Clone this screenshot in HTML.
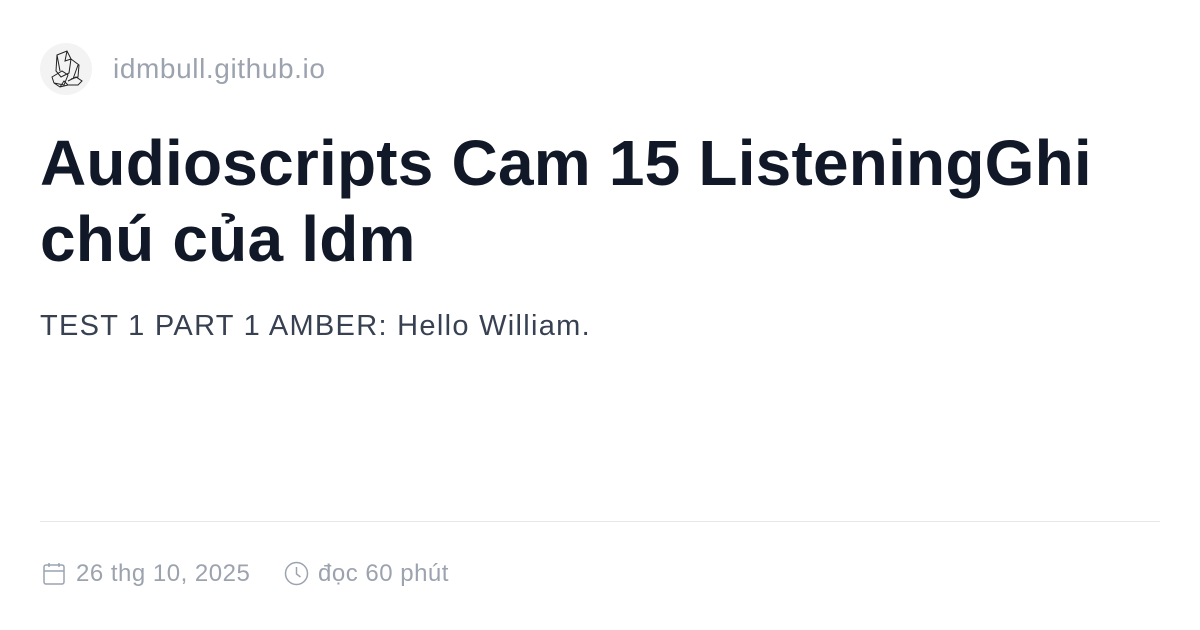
<!DOCTYPE html>
<html><head><meta charset="utf-8"><style>
body{margin:0;width:1200px;height:630px;background:#fff;font-family:"Liberation Sans",sans-serif;position:relative;overflow:hidden}
.logo{position:absolute;left:40px;top:43px;width:52px;height:52px;border-radius:50%;background:#f3f3f3}
.dom{position:absolute;left:113px;top:52px;font-size:28px;color:#9ca3af;line-height:34px;letter-spacing:0.6px}
h1{position:absolute;left:40px;top:125px;margin:0;width:1100px;font-size:64px;font-weight:700;color:#111827;line-height:76px;letter-spacing:0.2px}
.sub{position:absolute;left:40px;top:306px;font-size:29px;color:#374151;line-height:40px;letter-spacing:1.3px}
.hr{position:absolute;left:40px;top:521px;width:1120px;height:1px;background:#e5e7eb}
.ft{position:absolute;top:559px;font-size:24px;color:#9ca3af;line-height:30px;letter-spacing:0.5px}
</style></head><body>
<div class="logo"><svg width="52" height="52" viewBox="0 0 52 52" fill="none" stroke="#222" stroke-width="1"><path d="M17 12l10-4 4 8-2 14-8 4-5-6z M27 8l-2 10 6-2 M31 16l8 6-1 12-7 2 M38 22l-5 14 M17 12l3 16 M12 34l10-6 6 4-4 10-10-2z M14 40l6 4 8-2 10 0 4-4-6-4-8 4 M20 44l4-6 4 4"/></svg></div>
<div class="dom">idmbull.github.io</div>
<h1>Audioscripts Cam 15 ListeningGhi chú của ldm</h1>
<div class="sub">TEST 1 PART 1 AMBER: Hello William.</div>
<div class="hr"></div>
<svg style="position:absolute;left:43px;top:562px" width="22" height="24" viewBox="0 0 22 24" fill="none" stroke="#9ca3af" stroke-width="1.5"><rect x="1" y="3" width="20" height="19" rx="2"/><path d="M1 9h20M6 1v4M16 1v4"/></svg>
<div class="ft" style="left:76px">26 thg 10, 2025</div>
<svg style="position:absolute;left:284px;top:561px" width="25" height="25" viewBox="0 0 25 25" fill="none" stroke="#9ca3af" stroke-width="1.5"><circle cx="12.5" cy="12.5" r="11"/><path d="M12.5 6v7l4 3"/></svg>
<div class="ft" style="left:318px">đọc 60 phút</div>
</body></html>
